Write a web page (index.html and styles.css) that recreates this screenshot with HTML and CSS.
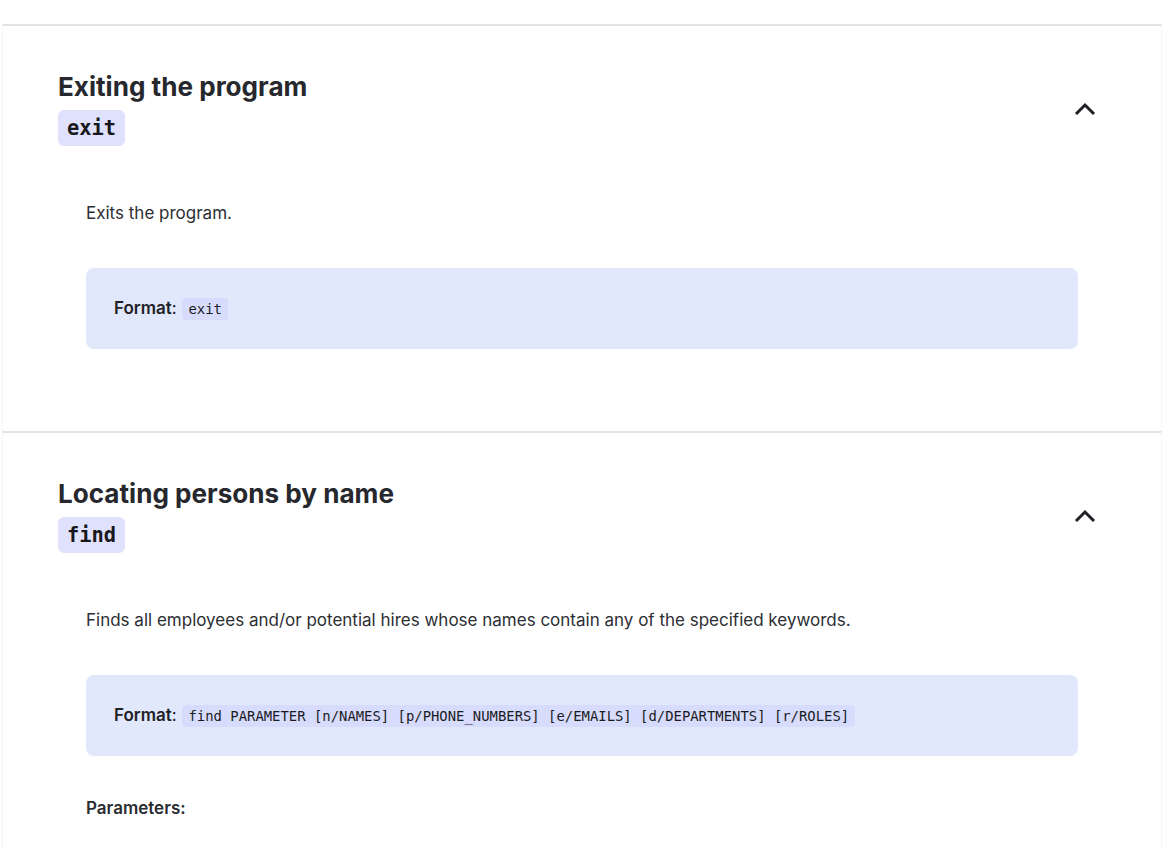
FILE: index.html
```html
<!DOCTYPE html>
<html lang="en">
<head>
<meta charset="utf-8">
<title>User Guide</title>
<link rel="stylesheet" href="styles.css">
</head>
<body>
<div class="guide">
  <section class="command">
    <div class="command-header">
      <div class="command-titles">
        <h2 class="command-title">Exiting the program</h2>
        <code class="command-name">exit</code>
      </div>
      <button class="toggle" aria-label="Collapse">
        <svg width="22" height="14" viewBox="0 0 22 14"><polyline points="2,12 11,3 20,12" fill="none" stroke="#1f2126" stroke-width="3" stroke-linejoin="miter"/></svg>
      </button>
    </div>
    <div class="command-body">
      <p class="desc">Exits the program.</p>
      <div class="format"><strong>Format</strong>: <code class="inline">exit</code></div>
    </div>
  </section>
  <section class="command">
    <div class="command-header">
      <div class="command-titles">
        <h2 class="command-title">Locating persons by name</h2>
        <code class="command-name">find</code>
      </div>
      <button class="toggle" aria-label="Collapse">
        <svg width="22" height="14" viewBox="0 0 22 14"><polyline points="2,12 11,3 20,12" fill="none" stroke="#1f2126" stroke-width="3" stroke-linejoin="miter"/></svg>
      </button>
    </div>
    <div class="command-body">
      <p class="desc">Finds all employees and/or potential hires whose names contain any of the specified keywords.</p>
      <div class="format"><strong>Format</strong>: <code class="inline">find PARAMETER [n/NAMES] [p/PHONE_NUMBERS] [e/EMAILS] [d/DEPARTMENTS] [r/ROLES]</code></div>
      <p class="params">Parameters:</p>
    </div>
  </section>
</div>
</body>
</html>
```
FILE: styles.css
```css
html, body {
  margin: 0;
  padding: 0;
  background: #ffffff;
}
body {
  font-family: Inter, "Noto Sans", sans-serif;
  color: #2a2c31;
}
.guide {
  padding-top: 24px;
  margin: 0 2px;
}
.command {
  border-top: 2px solid #e3e3e5;
  border-left: 1px solid #f5f5f6;
  border-right: 1px solid #f5f5f6;
  padding: 45px 0 82px;
}
.command-header {
  display: flex;
  align-items: center;
  justify-content: space-between;
  padding: 0 56px 0 55px;
}
.command-titles {
  display: flex;
  flex-direction: column;
  align-items: flex-start;
}
.command-title {
  margin: 0;
  font-size: 26.1px;
  line-height: 32px;
  font-weight: 700;
  color: #26282d;
  letter-spacing: 0;
}
.command-name {
  margin-top: 7px;
  display: inline-block;
  font-family: "DejaVu Sans Mono", monospace;
  font-weight: 700;
  font-size: 20.4px;
  line-height: 36px;
  padding: 0 9px;
  background: #e0e1fc;
  border-radius: 6px;
  color: #17181c;
}
.toggle {
  width: 40px;
  height: 40px;
  border: 0;
  background: none;
  padding: 0;
  display: flex;
  align-items: center;
  justify-content: center;
}
.command-body {
  padding: 0 83px;
}
.desc {
  margin: 55px 0 0;
  font-size: 17px;
  line-height: 24px;
  color: #2c2e33;
}
.format {
  margin-top: 43px;
  background: #e1e8fb;
  border-radius: 8px;
  padding: 28px 28px;
  font-size: 17px;
  line-height: 25px;
  color: #1f2126;
}
.format strong {
  font-weight: 600;
}
.inline {
  font-family: "DejaVu Sans Mono", monospace;
  font-size: 13.9px;
  line-height: 22px;
  display: inline-block;
  margin-left: 1px;
  padding: 0 6px;
  background: #d8dcfc;
  border-radius: 4px;
  color: #1a1b1f;
}
.params {
  margin: 40px 0 0;
  font-size: 17px;
  line-height: 24px;
  font-weight: 600;
  color: #2a2c31;
}
```
